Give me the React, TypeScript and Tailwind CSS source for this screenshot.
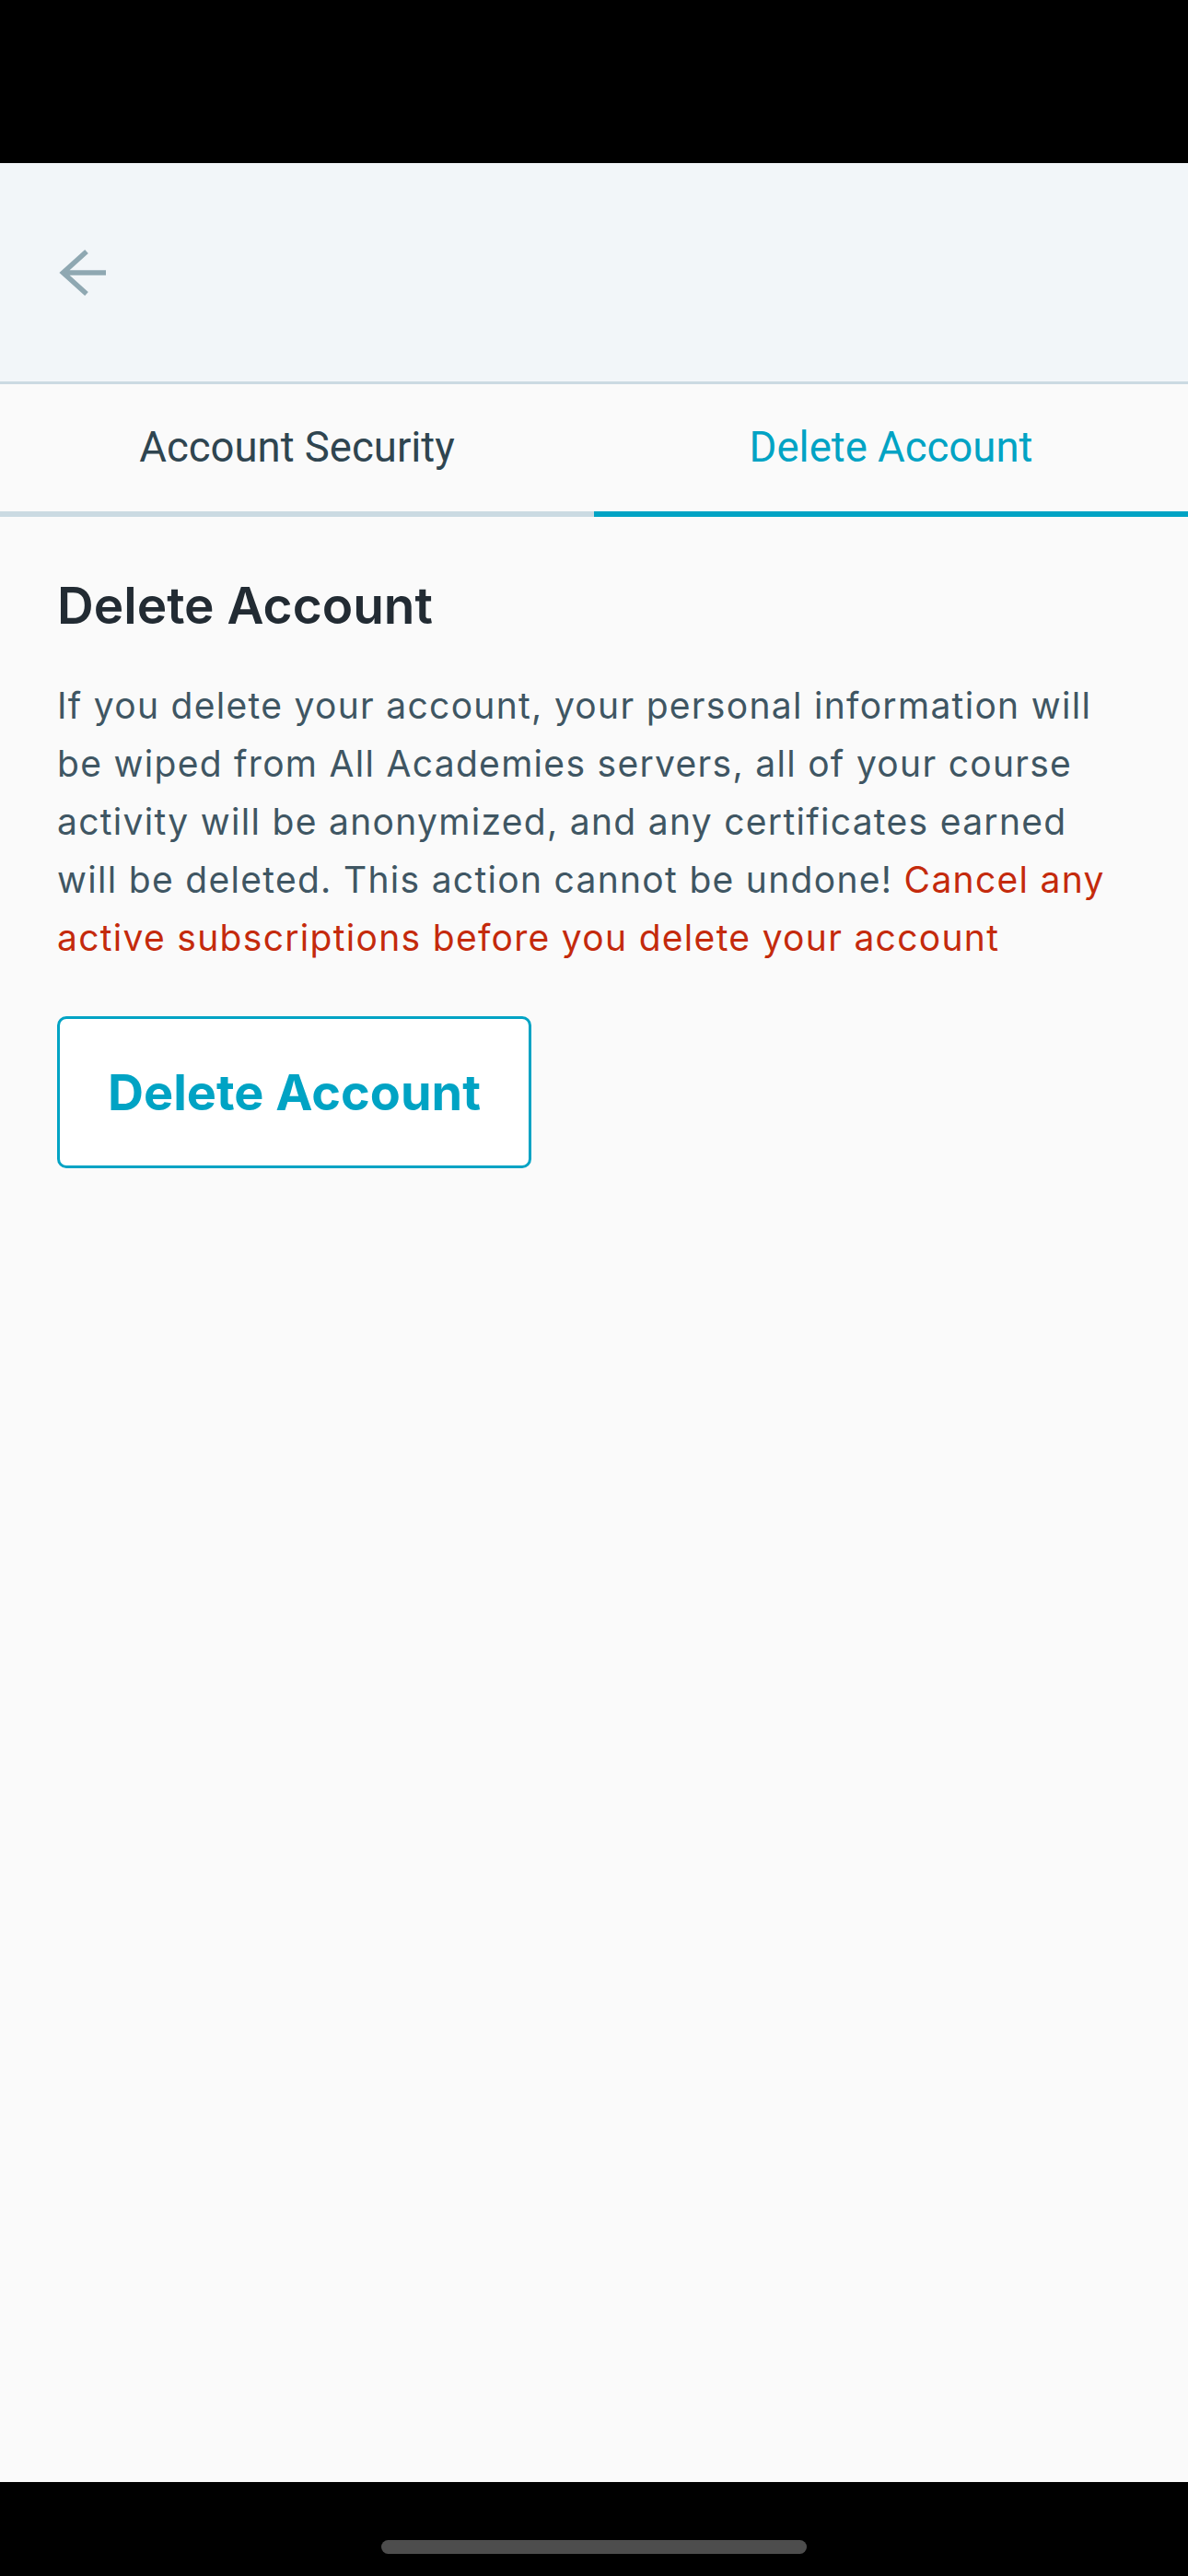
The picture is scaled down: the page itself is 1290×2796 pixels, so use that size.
import { useState } from "react";

const tabs = ["Account Security", "Delete Account"];

const BackArrow = () => (
  <svg width="58" height="56" viewBox="0 0 58 56" fill="none">
    <path
      d="M6 28H53M32 5L6.5 28L32 51"
      stroke="#8fa8b2"
      strokeWidth="5.5"
      strokeLinejoin="miter"
    />
  </svg>
);

const App = () => {
  const [active, setActive] = useState(1);

  return (
    <div className="flex flex-col w-full min-h-[2796px] bg-[#fafafa] font-['Inter',sans-serif]">
      <div className="h-[177px] bg-black" />

      <header className="flex items-center h-[240px] bg-[#f2f6f9] border-b-[3px] border-[#cbdae2] pl-[62px]">
        <button className="flex items-center">
          <BackArrow />
        </button>
      </header>

      <nav className="grid grid-cols-2">
        {tabs.map((tab, i) => (
          <button
            key={tab}
            onClick={() => setActive(i)}
            className={`h-[144px] border-b-[6px] font-['Roboto',sans-serif] text-[45.5px] ${
              active === i
                ? "border-[#00a3c4] text-[#00a3c4]"
                : "border-[#cbdae2] text-[#2f4550]"
            }`}
          >
            {tab}
          </button>
        ))}
      </nav>

      <main className="flex-1 px-[62px] pt-[64px]">
        <h2 className="text-[55px] leading-[64px] font-semibold text-[#222b33]">
          Delete Account
        </h2>
        <p className="mt-[45px] text-[39px] leading-[63px] tracking-[1.3px] text-[#3f5663]">
          If you delete your account, your personal information will be wiped
          from All Academies servers, all of your course activity will be
          anonymized, and any certificates earned will be deleted. This action
          cannot be undone!{" "}
          <span className="text-[#c42a0c]">
            Cancel any active subscriptions before you delete your account
          </span>
        </p>
        <button className="mt-[54px] h-[165px] px-[52px] rounded-[10px] border-[3px] border-[#00a3c4] bg-white text-[54px] font-bold text-[#00a3c4]">
          Delete Account
        </button>
      </main>

      <div className="flex items-start justify-center h-[102px] bg-black pt-[63px]">
        <div className="w-[462px] h-[15px] rounded-full bg-[#4d4d4d]" />
      </div>
    </div>
  );
};

export default App;
